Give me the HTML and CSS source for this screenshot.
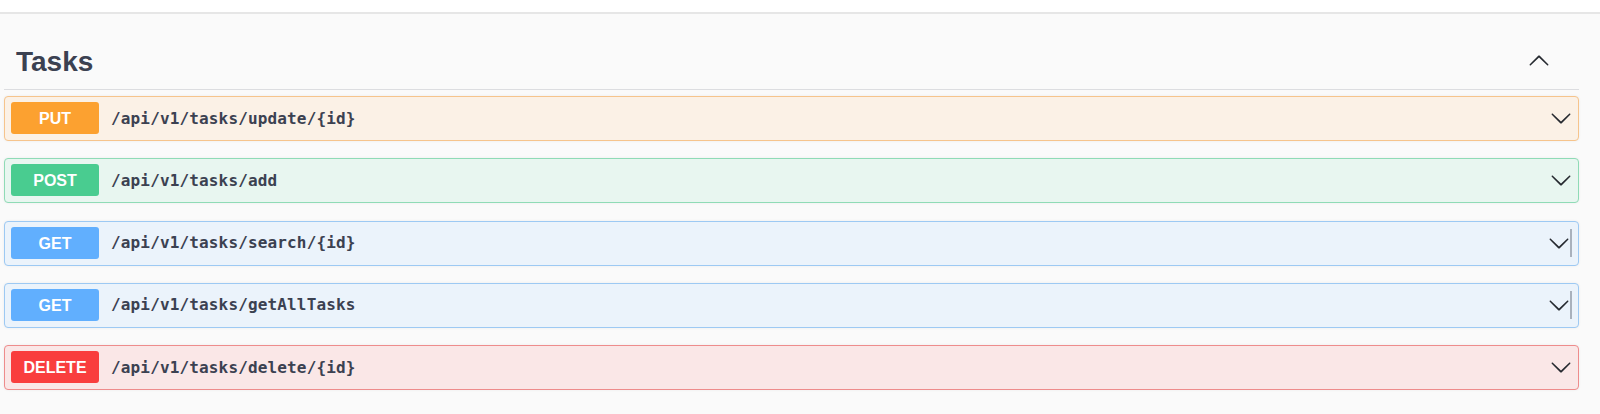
FILE: index.html
```html
<!DOCTYPE html>
<html lang="en">
<head>
<meta charset="utf-8">
<title>Tasks</title>
<link rel="stylesheet" href="styles.css">
</head>
<body>
<div class="topbar"></div>
<main class="wrapper">
  <section class="tag-section">
    <h3 class="opblock-tag">
      <span class="tag-name">Tasks</span>
      <svg class="arrow arrow-up" width="22" height="22" viewBox="0 0 20 20" aria-hidden="true"><path d="M17.418 6.109c.272-.268.709-.268.979 0s.271.701 0 .969l-7.908 7.83c-.27.268-.707.268-.979 0l-7.908-7.830c-.27-.268-.27-.701 0-.969.271-.268.709-.268.979 0L10 13.25l7.418-7.141z"/></svg>
    </h3>

    <div class="opblock opblock-put">
      <div class="summary">
        <span class="method">PUT</span>
        <span class="path">/api/v1/tasks/update/{id}</span>
        <svg class="arrow" width="22" height="22" viewBox="0 0 20 20" aria-hidden="true"><path d="M17.418 6.109c.272-.268.709-.268.979 0s.271.701 0 .969l-7.908 7.83c-.27.268-.707.268-.979 0l-7.908-7.83c-.27-.268-.27-.701 0-.969.271-.268.709-.268.979 0L10 13.25l7.418-7.141z"/></svg>
      </div>
    </div>

    <div class="opblock opblock-post">
      <div class="summary">
        <span class="method">POST</span>
        <span class="path">/api/v1/tasks/add</span>
        <svg class="arrow" width="22" height="22" viewBox="0 0 20 20" aria-hidden="true"><path d="M17.418 6.109c.272-.268.709-.268.979 0s.271.701 0 .969l-7.908 7.83c-.27.268-.707.268-.979 0l-7.908-7.83c-.27-.268-.27-.701 0-.969.271-.268.709-.268.979 0L10 13.25l7.418-7.141z"/></svg>
      </div>
    </div>

    <div class="opblock opblock-get">
      <div class="summary">
        <span class="method">GET</span>
        <span class="path">/api/v1/tasks/search/{id}</span>
        <svg class="arrow" width="22" height="22" viewBox="0 0 20 20" aria-hidden="true"><path d="M17.418 6.109c.272-.268.709-.268.979 0s.271.701 0 .969l-7.908 7.83c-.27.268-.707.268-.979 0l-7.908-7.83c-.27-.268-.27-.701 0-.969.271-.268.709-.268.979 0L10 13.25l7.418-7.141z"/></svg>
        <span class="edge-line"></span>
      </div>
    </div>

    <div class="opblock opblock-get">
      <div class="summary">
        <span class="method">GET</span>
        <span class="path">/api/v1/tasks/getAllTasks</span>
        <svg class="arrow" width="22" height="22" viewBox="0 0 20 20" aria-hidden="true"><path d="M17.418 6.109c.272-.268.709-.268.979 0s.271.701 0 .969l-7.908 7.83c-.27.268-.707.268-.979 0l-7.908-7.83c-.27-.268-.27-.701 0-.969.271-.268.709-.268.979 0L10 13.25l7.418-7.141z"/></svg>
        <span class="edge-line"></span>
      </div>
    </div>

    <div class="opblock opblock-delete">
      <div class="summary">
        <span class="method">DELETE</span>
        <span class="path">/api/v1/tasks/delete/{id}</span>
        <svg class="arrow" width="22" height="22" viewBox="0 0 20 20" aria-hidden="true"><path d="M17.418 6.109c.272-.268.709-.268.979 0s.271.701 0 .969l-7.908 7.83c-.27.268-.707.268-.979 0l-7.908-7.83c-.27-.268-.27-.701 0-.969.271-.268.709-.268.979 0L10 13.25l7.418-7.141z"/></svg>
      </div>
    </div>
  </section>
</main>
</body>
</html>
```

FILE: styles.css
```css
html, body {
  margin: 0;
  padding: 0;
}

body {
  background: #fafafa;
  font-family: "Liberation Sans", Arial, sans-serif;
  color: #3b4151;
}

.topbar {
  height: 12px;
  background: #ffffff;
  border-bottom: 2px solid #e6e6e6;
}

.wrapper {
  padding: 0 21px 0 4px;
}

.tag-section {
  display: flex;
  flex-direction: column;
}

.opblock-tag {
  display: flex;
  align-items: center;
  margin: 20px 0 6px 0;
  padding: 10px 29px 9px 12px;
  border-bottom: 1px solid #dcdde0;
  font-size: 28px;
  line-height: 36px;
  font-weight: 700;
  color: #3b4151;
}

.tag-name {
  flex: 1;
}

.arrow {
  flex: none;
  fill: #262a30;
}

.arrow-up {
  transform: rotate(180deg);
  margin-bottom: 3px;
}

.opblock {
  border: 1px solid;
  border-radius: 4px;
  box-shadow: 0 0 3px rgba(0, 0, 0, 0.06);
  margin-bottom: 17.25px;
}

.summary {
  display: flex;
  align-items: center;
  padding: 5px 6px 6px 6px;
}

.method {
  flex: none;
  width: 88px;
  height: 32px;
  line-height: 33px;
  border-radius: 3px;
  text-align: center;
  color: #ffffff;
  font-family: "Liberation Sans", Arial, sans-serif;
  font-weight: 700;
  font-size: 16px;
}

.path {
  flex: 1;
  margin-left: 12px;
  font-family: "DejaVu Sans Mono", "Liberation Mono", monospace;
  font-weight: 700;
  font-size: 16px;
  letter-spacing: 0.15px;
  color: #3b4151;
}

.edge-line {
  flex: none;
  width: 2px;
  height: 28px;
  background: #a9b1bc;
}

.opblock-put {
  background: #fbf1e6;
  border-color: #f6c48c;
}
.opblock-put .method { background: #fca130; }

.opblock-post {
  background: #e8f6f0;
  border-color: #8fdbb6;
}
.opblock-post .method { background: #49cc90; }

.opblock-get {
  background: #ebf3fb;
  border-color: #9dc9f3;
}
.opblock-get .method { background: #61affe; }

.opblock-delete {
  background: #fae7e7;
  border-color: #ee8c8c;
}
.opblock-delete .method { background: #f93e3e; }
```
